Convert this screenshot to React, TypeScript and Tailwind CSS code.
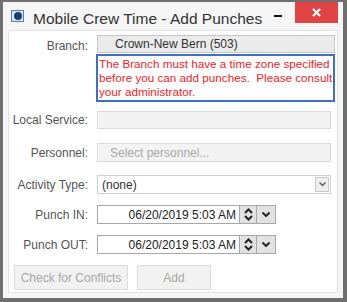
import React from 'react';

function Label({ children }: { children: React.ReactNode }) {
    return <div className="w-[88px] shrink-0 pr-[9px] text-right text-[12px] text-[#555]">{children}</div>;
}

function DateField({ value }: { value: string }) {
    return (
        <div className="flex h-[19px] w-[179px] border border-[#a8a8a8] bg-white">
            <div className="flex flex-1 items-center justify-end pr-[3px] text-[12px] text-[#222]">{value}</div>
            <div className="flex w-[17px] flex-col items-center justify-center border-l border-[#a8a8a8] bg-[#e2e2e2]">
                <svg width="9" height="13" viewBox="0 0 9 13">
                    <path d="M1 5 L4.5 1.5 L8 5" fill="none" stroke="#222" strokeWidth="2" />
                    <path d="M1 8 L4.5 11.5 L8 8" fill="none" stroke="#222" strokeWidth="2" />
                </svg>
            </div>
            <div className="flex w-[19px] items-center justify-center border-l border-[#a8a8a8] bg-[#e2e2e2]">
                <svg width="8" height="5" viewBox="0 0 8 5">
                    <path d="M0.5 0.5 L4 4 L7.5 0.5" fill="none" stroke="#222" strokeWidth="2" />
                </svg>
            </div>
        </div>
    );
}

export default function App() {
    return (
        <div className="h-[302px] w-[347px] bg-[#6f6f6f] pb-[4px] pl-[3px] pr-[4px] pt-[2px]" style={{ fontFamily: '"Liberation Sans", Arial, sans-serif' }}>
            <div className="flex h-full flex-col bg-[#f6f6f6]">
                <div className="flex h-[26px] items-start">
                    <div className="ml-[8px] mt-[8px] flex h-[12px] w-[13px] shrink-0 items-center justify-center border border-[#5a7ca8] bg-[#dbe6f2]">
                        <div className="h-[8px] w-[8px] rounded-full bg-[#1c3f6e]" />
                    </div>
                    <div className="ml-[9px] mt-[5px] min-w-0 flex-1 overflow-hidden whitespace-nowrap text-[15.5px] text-[#333]">
                        Mobile Crew Time - Add Punches
                    </div>
                    <div className="flex h-[26px] w-[24px] shrink-0 items-start pl-[3px] pt-[13px]">
                        <div className="h-[2px] w-[8px] bg-[#111]" />
                    </div>
                    <div className="mr-[5px] flex h-[21px] w-[43px] shrink-0 items-center justify-center bg-[#e04343]">
                        <svg width="9" height="9" viewBox="0 0 9 9">
                            <path d="M1 1 L8 8 M8 1 L1 8" stroke="#fff" strokeWidth="2.2" />
                        </svg>
                    </div>
                </div>
                <div className="mx-[5px] mb-[5px] mt-[2px] flex flex-1 flex-col border border-[#e2e2e2] bg-white pr-[6px] pt-[4px]">
                    <div className="flex items-start">
                        <Label><div className="pt-[2px]">Branch:</div></Label>
                        <div className="flex-1">
                            <div className="flex h-[18px] items-center border border-[#c6c6c6] bg-[#ebebeb] pl-[17px] text-[12px] text-[#333]">
                                Crown-New Bern (503)
                            </div>
                            <div className="-ml-px mt-px overflow-hidden whitespace-nowrap border-2 border-[#3d6fc4] bg-white px-px py-px text-[11.7px] leading-[14px] text-[#f0242a]">
                                The Branch must have a time zone specified<br />
                                before you can add punches.&nbsp; Please consult<br />
                                your administrator.
                            </div>
                        </div>
                    </div>
                    <div className="mt-[9px] flex items-center">
                        <Label>Local Service:</Label>
                        <div className="h-[18px] flex-1 border border-[#dadada] bg-[#f3f3f3]" />
                    </div>
                    <div className="mt-[14px] flex items-center">
                        <Label>Personnel:</Label>
                        <div className="flex h-[19px] flex-1 items-center border border-[#dadada] bg-[#f3f3f3] pl-[12px] text-[12px] text-[#a9a9a9]">
                            Select personnel...
                        </div>
                    </div>
                    <div className="mt-[13px] flex items-center">
                        <Label>Activity Type:</Label>
                        <div className="flex h-[19px] flex-1 items-center border border-[#d0d0d0] bg-white pl-[4px] text-[12px] text-[#333]">
                            <span className="flex-1">(none)</span>
                            <div className="mr-px flex h-[15px] w-[14px] items-center justify-center border border-[#c8c8c8] bg-[#eeeeee]">
                                <svg width="7" height="5" viewBox="0 0 7 5">
                                    <path d="M0.5 0.5 L3.5 3.5 L6.5 0.5" fill="none" stroke="#666" strokeWidth="1.5" />
                                </svg>
                            </div>
                        </div>
                    </div>
                    <div className="mt-[11px] flex items-center">
                        <Label>Punch IN:</Label>
                        <DateField value="06/20/2019 5:03 AM" />
                    </div>
                    <div className="mt-[11px] flex items-center">
                        <Label>Punch OUT:</Label>
                        <DateField value="06/20/2019 5:03 AM" />
                    </div>
                    <div className="ml-[5px] mt-[11px] flex gap-[9px]">
                        <div className="flex h-[25px] w-[114px] items-center justify-center border border-[#dcdcdc] bg-[#f2f2f2] text-[12px] text-[#a8a8a8]">
                            Check for Conflicts
                        </div>
                        <div className="flex h-[25px] w-[74px] items-center justify-center border border-[#dcdcdc] bg-[#f2f2f2] text-[12px] text-[#a8a8a8]">
                            Add
                        </div>
                    </div>
                </div>
            </div>
        </div>
    );
}
